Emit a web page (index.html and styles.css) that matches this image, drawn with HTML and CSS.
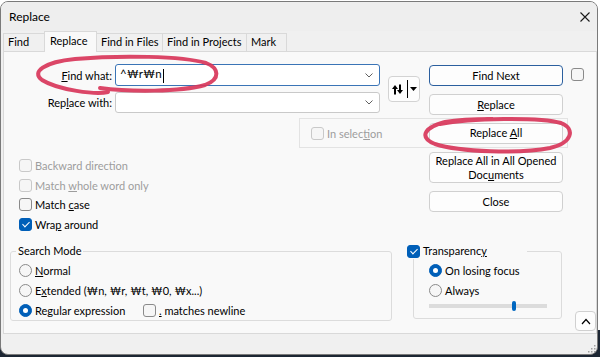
FILE: index.html
```html
<!DOCTYPE html>
<html lang="en">
<head>
  <meta charset="UTF-8">
  <title>Replace</title>
  <link rel="stylesheet" href="styles.css">
</head>
<body>
  <div class="window">
    <!-- Barra del titolo -->
    <div class="titlebar">
      <span>Replace</span>
      <svg class="close" width="10" height="10" viewBox="0 0 10 10"><path d="M0.5 0.5L9.5 9.5M9.5 0.5L0.5 9.5" stroke="#1a1a1a" stroke-width="1.1"/></svg>
    </div>

    <!-- Schede -->
    <div class="tabs">
      <div class="tab tab-find">Find</div>
      <div class="tab tab-replace active">Replace</div>
      <div class="tab tab-files">Find in Files</div>
      <div class="tab tab-projects">Find in Projects</div>
      <div class="tab tab-mark">Mark</div>
    </div>

    <div class="panel">
      <div class="top">
        <div class="fields">
          <div class="field">
            <label><u>F</u>ind what:</label>
            <div class="combo focus">
              <span class="value">^₩r₩n<span class="caret"></span></span>
              <svg width="8" height="5" viewBox="0 0 8 5"><path d="M0.5 0.5L4 4L7.5 0.5" fill="none" stroke="#606060"/></svg>
            </div>
          </div>
          <div class="field">
            <label>Rep<u>l</u>ace with:</label>
            <div class="combo">
              <span class="value"></span>
              <svg width="8" height="5" viewBox="0 0 8 5"><path d="M0.5 0.5L4 4L7.5 0.5" fill="none" stroke="#606060"/></svg>
            </div>
          </div>
        </div>
        <div class="swap">
          <svg width="30" height="24" viewBox="0 0 30 24">
            <path d="M6 10.5V17.5" stroke="#000" stroke-width="2"/>
            <polygon points="3,12 6,8 9,12" fill="#000"/>
            <path d="M11 7.5V14.5" stroke="#000" stroke-width="2"/>
            <polygon points="8,13 11,17 14,13" fill="#000"/>
            <path d="M18.5 3V21" stroke="#000" stroke-width="1"/>
            <polygon points="21,10 28,10 24.5,14" fill="#000"/>
          </svg>
        </div>
        <div class="btncol btncol-top">
          <div class="btn default"><span>Find Next</span></div>
          <div class="btn"><span><u>R</u>eplace</span></div>
        </div>
        <span class="cb side"></span>
      </div>

      <div class="selection">
        <div class="opt disabled"><span class="cb"></span><span>In selec<u>t</u>ion</span></div>
        <div class="btn wide"><span>Replace <u>A</u>ll</span></div>
      </div>

      <div class="middle">
        <div class="options">
          <div class="opt disabled"><span class="cb"></span><span>Backward direction</span></div>
          <div class="opt disabled"><span class="cb"></span><span>Match <u>w</u>hole word only</span></div>
          <div class="opt"><span class="cb"></span><span>Match <u>c</u>ase</span></div>
          <div class="opt"><span class="cb checked"></span><span>Wra<u>p</u> around</span></div>
        </div>
        <div class="btncol btncol-mid">
          <div class="btn tall"><span>Replace All in All Opened<br>Doc<u>u</u>ments</span></div>
          <div class="btn"><span>Close</span></div>
        </div>
      </div>

      <div class="bottom">
        <fieldset class="group mode">
          <legend>Search Mode</legend>
          <div class="group-body">
            <div class="opt"><span class="rb"></span><span><u>N</u>ormal</span></div>
            <div class="opt"><span class="rb"></span><span>E<u>x</u>tended (₩n, ₩r, ₩t, ₩0, ₩x...)</span></div>
            <div class="opt">
              <span class="rb checked"></span><span class="regex">Re<u>g</u>ular expression</span>
              <span class="cb"></span><span><u>.</u> matches newline</span>
            </div>
          </div>
        </fieldset>
        <fieldset class="group transp">
          <legend><span class="cb checked"></span><span>Transparenc<u>y</u></span></legend>
          <div class="group-body">
            <div class="opt"><span class="rb checked"></span><span>On losing focus</span></div>
            <div class="opt"><span class="rb"></span><span>Always</span></div>
            <div class="slider"><span class="thumb"></span></div>
          </div>
        </fieldset>
        <div class="collapse">
          <svg width="10" height="7" viewBox="0 0 10 7"><path d="M1 6L5 1.5L9 6" fill="none" stroke="#000" stroke-width="1.2"/></svg>
        </div>
      </div>
    </div>

    <div class="statusbar">
      <svg width="10" height="10" viewBox="0 0 10 10" fill="#a0a0a0">
        <rect x="8" y="2" width="1.5" height="1.5"/>
        <rect x="5" y="5" width="1.5" height="1.5"/><rect x="8" y="5" width="1.5" height="1.5"/>
        <rect x="2" y="8" width="1.5" height="1.5"/><rect x="5" y="8" width="1.5" height="1.5"/><rect x="8" y="8" width="1.5" height="1.5"/>
      </svg>
    </div>
  </div>

  <!-- Segni a mano in rosso sopra la finestra -->
  <svg class="marks" width="600" height="357" viewBox="0 0 600 357">
    <path d="M108 92C96 95 58 90 42 80C31 72 44 62 75 59C120 55 182 56 206 63C219 68 221 79 205 85C180 92 130 92 100 88" />
    <path d="M440 124C470 118 540 117 561 123C576 129 572 143 550 148C520 154 460 152 435 144C420 138 422 128 445 122C462 119 480 119 492 119" />
  </svg>
</body>
</html>
```

FILE: styles.css
```css
/* Base */
* {
  margin: 0;
  padding: 0;
  box-sizing: border-box;
}
body {
  position: relative;
  width: 600px;
  height: 357px;
  overflow: hidden;
  background: linear-gradient(to bottom, #fff 0, #fff 330px, #1c2633 330px);
  font-family: Lato, "Noto Sans", sans-serif;
  font-size: 11px;
  color: #000;
}
u {
  text-decoration: underline;
  text-underline-offset: 1px;
}

/* Finestra */
.window {
  margin-top: 1px;
  width: 598px;
  height: 354px;
  border: 1px solid #7a7a7a;
  border-radius: 8px;
  background: #f0f0f0;
  overflow: hidden;
  display: flex;
  flex-direction: column;
}
.titlebar {
  height: 29px;
  flex: none;
  display: flex;
  align-items: center;
  justify-content: space-between;
  padding: 0 7px 0 8px;
  background: #eeeeee;
  font-size: 12px;
}

/* Schede */
.tabs {
  height: 20px;
  flex: none;
  display: flex;
  align-items: flex-end;
  padding-left: 2px;
  position: relative;
  z-index: 1;
}
.tab {
  height: 18px;
  padding: 0 4px;
  margin-right: -1px;
  border: 1px solid #d9d9d9;
  border-bottom: none;
  background: #f0f0f0;
  line-height: 16px;
  white-space: nowrap;
}
.tab.active {
  height: 21px;
  margin-bottom: -1px;
  padding: 1px 5px 0;
  background: #f9f9f9;
}
.tab-find { width: 42px; }
.tab-replace { width: 53px; }
.tab-files { width: 67px; }
.tab-projects { width: 85px; }
.tab-mark { width: 41px; }

/* Pannello */
.panel {
  margin-left: 2px;
  height: 283px;
  flex: none;
  border: 1px solid #d9d9d9;
  background: #f9f9f9;
}
.top {
  display: flex;
  align-items: flex-start;
  height: 63px;
}
.fields {
  width: 376px;
  padding-top: 12px;
}
.field {
  display: flex;
  align-items: center;
  height: 22px;
}
.field + .field {
  margin-top: 6px;
  height: 21px;
}
.field label {
  width: 111px;
  padding-right: 3px;
  text-align: right;
}
.combo {
  width: 265px;
  height: 100%;
  border: 1px solid #c9c9c9;
  border-radius: 3px;
  background: #fff;
  display: flex;
  align-items: center;
  justify-content: space-between;
  padding: 0 6px 0 4px;
}
.combo.focus {
  border-color: #3a74b6;
}
.value {
  font-size: 11.5px;
}
.caret {
  display: inline-block;
  width: 1px;
  height: 14px;
  margin-left: 1px;
  background: #000;
  vertical-align: middle;
}
.swap {
  margin: 24px 0 0 8px;
  width: 32px;
  height: 26px;
  border: 1px solid #d3d3d3;
  border-radius: 4px;
  background: #fdfdfd;
}
.swap svg {
  display: block;
}

/* Pulsanti */
.btncol {
  margin-left: 9px;
  width: 134px;
  display: flex;
  flex-direction: column;
  gap: 8px;
}
.btncol-top {
  padding-top: 13px;
}
.btncol-mid {
  margin: 4px 0 0 0;
}
.btn {
  height: 21px;
  border: 1px solid #d0d0d0;
  border-radius: 4px;
  background: #fdfdfd;
  display: flex;
  align-items: center;
  justify-content: center;
  text-align: center;
  line-height: 14px;
}
.btn.default {
  border-color: #2b5f9e;
}
.btn.tall {
  height: 31px;
}
.btn.wide {
  width: 134px;
}
.cb.side {
  margin: 16px 0 0 8px;
}

/* Caselle e radio */
.cb,
.rb {
  flex: none;
  width: 13px;
  height: 13px;
  border: 1px solid #8a8a8a;
  background: #f6f6f6;
  display: inline-flex;
  align-items: center;
  justify-content: center;
}
.cb {
  border-radius: 3px;
}
.rb {
  border-radius: 50%;
}
.cb.checked {
  background: #005fb8;
  border-color: #005fb8;
}
.cb.checked::after {
  content: "";
  width: 3px;
  height: 6px;
  margin-top: -2px;
  border-right: 1.3px solid #fff;
  border-bottom: 1.3px solid #fff;
  transform: rotate(45deg);
}
.rb.checked {
  background: #005fb8;
  border-color: #005fb8;
}
.rb.checked::after {
  content: "";
  width: 5px;
  height: 5px;
  border-radius: 50%;
  background: #fff;
}
.opt {
  display: flex;
  align-items: center;
  gap: 3px;
  height: 19.5px;
  white-space: nowrap;
}
.opt.disabled {
  color: #9d9d9d;
}
.opt.disabled .cb {
  border-color: #c9c9c9;
}

.selection {
  margin: 3px 0 0 295px;
  width: 269px;
  height: 30px;
  border: 1px solid #e3e3e3;
  display: flex;
  align-items: center;
  justify-content: space-between;
  padding: 0 4px 0 11px;
}

.middle {
  display: flex;
  align-items: flex-start;
}
.options {
  margin: 8px 0 0 15px;
  width: 410px;
}

/* Gruppi in basso */
.bottom {
  display: flex;
  align-items: flex-start;
  margin-top: 9px;
}
.group {
  border: 1px solid #dcdcdc;
  border-radius: 3px;
}
.group legend {
  line-height: 16px;
}
.group .opt {
  height: 20px;
}
.group-body {
  padding-top: 1px;
}
.mode {
  margin-left: 6px;
  width: 382px;
  padding: 0 0 0 8px;
}
.mode legend {
  margin-left: -3px;
  padding: 0 2px;
}
.regex {
  width: 105px;
}
.transp {
  margin-left: 21px;
  width: 149px;
  padding: 0 0 6px 15px;
}
.transp legend {
  margin-left: -22px;
  width: 120px;
  display: flex;
  align-items: center;
  gap: 3px;
}
.slider {
  position: relative;
  width: 118px;
  height: 12px;
  background: linear-gradient(#dcdcdc, #dcdcdc) center / 100% 4px no-repeat;
}
.thumb {
  position: absolute;
  left: 83px;
  top: 1px;
  width: 4px;
  height: 10px;
  border-radius: 2px;
  background: #0067c0;
}
.collapse {
  margin: 68px 0 0 13px;
  width: 21px;
  height: 20px;
  border: 1px solid #d0d0d0;
  border-radius: 4px;
  background: #fdfdfd;
  display: flex;
  align-items: center;
  justify-content: center;
}

.statusbar {
  flex: 1;
  display: flex;
  justify-content: flex-end;
  align-items: flex-end;
  padding: 0 1px 1px 0;
}

/* Annotazioni */
.marks {
  position: absolute;
  top: 0;
  left: 0;
  pointer-events: none;
}
.marks path {
  fill: none;
  stroke: #d8365a;
  stroke-width: 4;
  stroke-linecap: round;
  stroke-linejoin: round;
  opacity: 0.92;
}
```
